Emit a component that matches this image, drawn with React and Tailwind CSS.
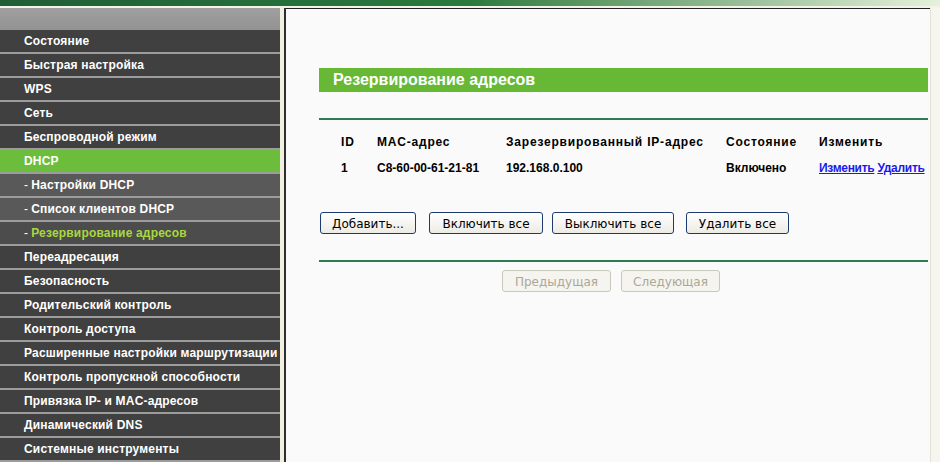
import React from "react";

const menu = [
  { label: "Состояние" },
  { label: "Быстрая настройка" },
  { label: "WPS" },
  { label: "Сеть" },
  { label: "Беспроводной режим" },
  { label: "DHCP", active: true },
  { label: "Настройки DHCP", sub: true },
  { label: "Список клиентов DHCP", sub: true },
  { label: "Резервирование адресов", sub: true, current: true },
  { label: "Переадресация" },
  { label: "Безопасность" },
  { label: "Родительский контроль" },
  { label: "Контроль доступа" },
  { label: "Расширенные настройки маршрутизации" },
  { label: "Контроль пропускной способности" },
  { label: "Привязка IP- и MAC-адресов" },
  { label: "Динамический DNS" },
  { label: "Системные инструменты" },
];

function MenuItem({ item }) {
  let bg = "bg-[#404040]";
  if (item.active) bg = "bg-[#6cbd3c]";
  else if (item.current) bg = "bg-[#4c4c4c]";
  else if (item.sub) bg = "bg-[#595959]";
  return (
    <div className={`h-[24px] border-b-2 border-[#9c9c9c] ${bg} flex items-center pl-[24px] text-[12px] font-bold tracking-[0.18px] text-white whitespace-nowrap`}>
      {item.sub && <span className="font-normal mr-[3px]">-</span>}
      <span className={item.current ? "text-[#a9d83e]" : ""}>{item.label}</span>
    </div>
  );
}

function XpButton({ children, className = "", disabled }) {
  return (
    <button
      className={
        disabled
          ? `h-[22px] pt-[2px] rounded-[3px] border border-[#cac8bb] bg-[#f5f4ee] text-[#aca899] text-[12px] font-['DejaVu_Sans',sans-serif] ${className}`
          : `h-[22px] pt-[2px] rounded-[3px] border border-[#1e3b70] bg-gradient-to-b from-white to-[#ecebe4] text-black text-[12px] font-['DejaVu_Sans',sans-serif] ${className}`
      }
    >
      {children}
    </button>
  );
}

export default function App() {
  return (
    <div className="w-[940px] h-[462px] overflow-hidden bg-[#fafafa] font-['Liberation_Sans',Arial,sans-serif]">
      {/* top strip */}
      <div className="h-[6px] bg-gradient-to-r from-[#1f5f35] via-[#2a7a3e] to-[#e6f2dc]" />
      <div className="h-[2px] bg-[#f4f3ea]" />

      <div className="flex h-[454px]">
        {/* sidebar */}
        <div className="w-[280px] shrink-0 bg-[#404040]">
          <div className="h-[22px] bg-gradient-to-b from-[#a0a0a0] to-[#929292]" />
          {menu.map((m) => (
            <MenuItem key={m.label} item={m} />
          ))}
        </div>
        <div className="w-[4px] bg-[#f1efe0]" />
        <div className="w-[2px] bg-[#2e2e2e]" />

        {/* content */}
        <div className="flex-1 border-t border-[#222] pl-[33px] pr-[2px]">
          <div className="mt-[59px] h-[24px] bg-[#67b834] flex items-center pl-[14px] text-white text-[16px] font-bold">
            Резервирование адресов
          </div>

          <div className="mt-[26px] h-[2px] bg-[#2e7d52]" />

          <div className="pl-[22px] mt-[12px] text-[12px] font-bold text-black whitespace-nowrap">
            <div className="flex h-[20px] items-center tracking-[0.8px]">
              <div className="w-[36px]">ID</div>
              <div className="w-[129px]">MAC-адрес</div>
              <div className="w-[220px]">Зарезервированный IP-адрес</div>
              <div className="w-[93px]">Состояние</div>
              <div>Изменить</div>
            </div>
            <div className="flex h-[20px] mt-[6px] items-center">
              <div className="w-[36px]">1</div>
              <div className="w-[129px]">C8-60-00-61-21-81</div>
              <div className="w-[220px]">192.168.0.100</div>
              <div className="w-[93px]">Включено</div>
              <div className="text-[#1a1aee] tracking-[-0.3px]">
                <a className="underline">Изменить</a> <a className="underline">Удалить</a>
              </div>
            </div>
          </div>

          <div className="flex mt-[34px] pl-[1px]">
            <XpButton className="w-[96px]">Добавить...</XpButton>
            <XpButton className="w-[114px] ml-[13px]">Включить все</XpButton>
            <XpButton className="w-[122px] ml-[9px]">Выключить все</XpButton>
            <XpButton className="w-[103px] ml-[12px]">Удалить все</XpButton>
          </div>

          <div className="mt-[26px] h-[2px] bg-[#2e7d52]" />

          <div className="flex mt-[8px] pl-[183px]">
            <XpButton disabled className="w-[109px]">Предыдущая</XpButton>
            <XpButton disabled className="w-[99px] ml-[10px]">Следующая</XpButton>
          </div>
        </div>

        <div className="w-[10px] border-l border-[#e4e2d6] bg-[#f6f5ee]" />
      </div>
    </div>
  );
}
